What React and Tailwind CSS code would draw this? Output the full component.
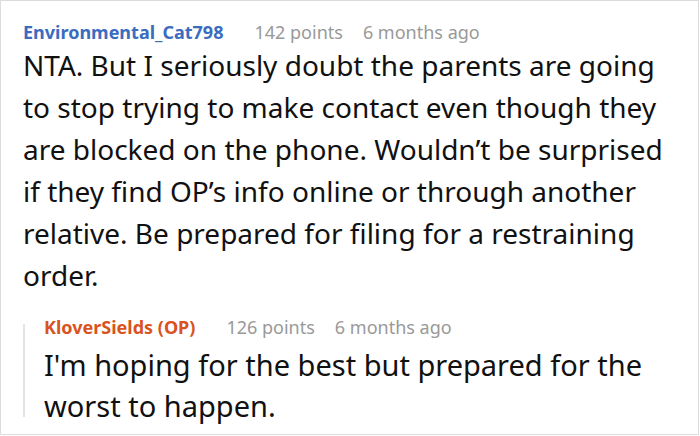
import React from 'react'

const font = { fontFamily: '"Noto Sans", "Open Sans", sans-serif' }

function Meta({ name, nameClass, points, age }) {
  return (
    <div className="flex items-center text-[18px] leading-[24px]">
      <span className={`font-bold ${nameClass}`}>{name}</span>
      <span className="ml-[31px] text-[#999]">{points} points</span>
      <span className="ml-[20px] text-[#999]">{age}</span>
    </div>
  )
}

export default function App() {
  return (
    <div style={font} className="w-[699px] h-[435px] bg-white border border-[#dcdcdc] pl-[22px] pt-[19px] text-[#111]">
      <Meta
        name="Environmental_Cat798"
        nameClass="text-[#3a6cbf]"
        points="142"
        age="6 months ago"
      />
      <p className="w-[660px] text-[28px] leading-[42px]">
        NTA. But I seriously doubt the parents are going to stop trying to make contact even though they are blocked on the phone. Wouldn’t be surprised if they find OP’s info online or through another relative. Be prepared for filing for a restraining order.
      </p>

      {/* reply */}
      <div className="mt-[19px] flex">
        <div className="mt-[9px] h-[93px] w-[2px] bg-[#e4e4e4]" />
        <div className="pl-[19px]">
          <Meta
            name="KloverSields (OP)"
            nameClass="text-[#d9531e]"
            points="126"
            age="6 months ago"
          />
          <p className="mt-[5px] w-[630px] text-[29px] leading-[41px]">
            I'm hoping for the best but prepared for the worst to happen.
          </p>
        </div>
      </div>
    </div>
  )
}
